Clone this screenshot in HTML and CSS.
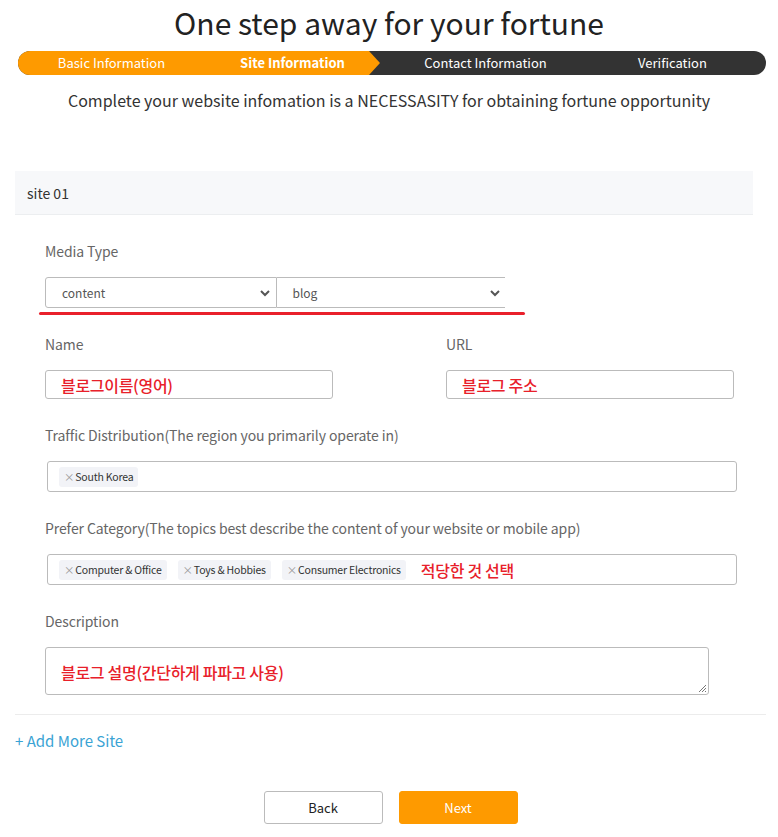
FILE: index.html
```html
<!doctype html>
<html lang="en-us">

<head>
    <meta charset="utf-8">
    <title>One step away for your fortune</title>
    <link rel="stylesheet" href="styles.css">
</head>

<body>
    <div id="main-container">
        <h1 class="title">One step away for your fortune</h1>

        <div class="steps">
            <div class="step done">Basic Information</div>
            <div class="step active">Site Information</div>
            <div class="step">Contact Information</div>
            <div class="step">Verification</div>
        </div>

        <p class="subtitle">Complete your website infomation is a NECESSASITY for obtaining fortune opportunity</p>

        <div class="site">
            <div class="site-head">site 01</div>

            <div class="site-body">
                <div class="field">
                    <div class="label">Media Type</div>
                    <div class="selects">
                        <div class="select">
                            <span>content</span>
                            <svg width="12" height="8" viewBox="0 0 12 8"><path d="M2 2l4 4 4-4" fill="none" stroke="#555" stroke-width="2"/></svg>
                        </div>
                        <div class="select last">
                            <span>blog</span>
                            <svg width="12" height="8" viewBox="0 0 12 8"><path d="M2 2l4 4 4-4" fill="none" stroke="#555" stroke-width="2"/></svg>
                        </div>
                        <div class="red-line"></div>
                    </div>
                </div>

                <div class="field two-cols">
                    <div>
                        <div class="label">Name</div>
                        <div class="input"><span class="note">블로그이름(영어)</span></div>
                    </div>
                    <div>
                        <div class="label">URL</div>
                        <div class="input"><span class="note">블로그 주소</span></div>
                    </div>
                </div>

                <div class="field">
                    <div class="label">Traffic Distribution(The region you primarily operate in)</div>
                    <div class="tags">
                        <span class="tag"><i>×</i>South Korea</span>
                    </div>
                </div>

                <div class="field">
                    <div class="label">Prefer Category(The topics best describe the content of your website or mobile app)</div>
                    <div class="tags">
                        <span class="tag"><i>×</i>Computer &amp; Office</span>
                        <span class="tag"><i>×</i>Toys &amp; Hobbies</span>
                        <span class="tag"><i>×</i>Consumer Electronics</span>
                        <span class="note pick">적당한 것 선택</span>
                    </div>
                </div>

                <div class="field last-field">
                    <div class="label">Description</div>
                    <div class="textarea">
                        <span class="note">블로그 설명(간단하게 파파고 사용)</span>
                        <svg class="grip" width="9" height="9" viewBox="0 0 9 9"><path d="M8 1L1 8M8 4L4 8M8 7L7 8" stroke="#777" stroke-width="1"/></svg>
                    </div>
                </div>
            </div>
        </div>

        <div class="add-more">+ Add More Site</div>

        <div class="buttons">
            <button class="btn">Back</button>
            <button class="btn primary">Next</button>
        </div>
    </div>
</body>

</html>
```

FILE: styles.css
```css
body {
    margin: 0;
    font-family: "Noto Sans CJK KR", "Noto Sans", sans-serif;
    color: #333;
    background: #fff;
}

#main-container {
    width: 778px;
    padding-bottom: 12px;
}

.title {
    margin: 0;
    font-size: 30px;
    font-weight: normal;
    line-height: 44px;
    text-align: center;
    color: #222;
}

.steps {
    margin: 7px 12px 0 18px;
    height: 24px;
    display: grid;
    grid-template-columns: repeat(4, 1fr);
    background: #333;
    border-radius: 12px;
    overflow: hidden;
}

.step {
    color: #fff;
    font-size: 13px;
    line-height: 24px;
    text-align: center;
}

.step.done {
    background: #fe9a00;
}

.step.active {
    background: #fe9a00;
    font-weight: bold;
    padding-right: 12px;
    clip-path: polygon(0 0, calc(100% - 23px) 0, calc(100% - 12px) 50%, calc(100% - 23px) 100%, 0 100%);
}

.subtitle {
    margin: 13px 0 0;
    font-size: 16px;
    line-height: 24px;
    text-align: center;
    color: #333;
}

.site {
    margin: 59px 12px 0 15px;
    border-bottom: 1px solid #ececec;
}

.site-head {
    width: 738px;
    height: 44px;
    box-sizing: border-box;
    padding-left: 12px;
    line-height: 44px;
    font-size: 14px;
    color: #333;
    background: #f7f8fa;
    border-bottom: 1px solid #eceef0;
}

.site-body {
    padding: 26px 0 19px 30px;
}

.field {
    margin-bottom: 26px;
}

.field.last-field {
    margin-bottom: 0;
}

.label {
    font-size: 14px;
    line-height: 20px;
    color: #666;
    margin-bottom: 16px;
    white-space: nowrap;
    letter-spacing: -0.1px;
}

.selects {
    position: relative;
    display: flex;
    width: 460px;
}

.select {
    flex: 1;
    height: 31px;
    box-sizing: border-box;
    display: flex;
    align-items: center;
    justify-content: space-between;
    padding: 0 5px 0 16px;
    font-size: 12px;
    color: #555;
    border: 1px solid #bbb;
    border-radius: 3px 0 0 3px;
}

.select.last {
    border-left: none;
    border-right: none;
    border-radius: 0;
    padding-right: 4px;
}

.red-line {
    position: absolute;
    left: -6px;
    top: 35px;
    width: 486px;
    height: 3px;
    border-radius: 2px;
    background: #e9202b;
}

.two-cols {
    display: grid;
    grid-template-columns: 288px 288px;
    column-gap: 113px;
}

.input {
    height: 29px;
    box-sizing: border-box;
    border: 1px solid #bbb;
    border-radius: 3px;
    padding-left: 15px;
    display: flex;
    align-items: center;
}

.note {
    color: #e8202a;
    font-size: 16px;
    font-weight: 500;
    letter-spacing: -0.3px;
}

.note.pick {
    margin-left: 4px;
}

.tags {
    margin-left: 2px;
    width: 690px;
    height: 31px;
    box-sizing: border-box;
    border: 1px solid #bbb;
    border-radius: 3px;
    padding: 0 11px;
    display: flex;
    align-items: center;
    gap: 11px;
}

.tag {
    height: 20px;
    line-height: 20px;
    padding: 0 5px;
    background: #f2f3f7;
    border-radius: 3px;
    font-size: 10.5px;
    letter-spacing: -0.2px;
    color: #333;
}

.tag i {
    font-style: normal;
    color: #999;
    margin-right: 1px;
}

.textarea {
    position: relative;
    width: 664px;
    height: 48px;
    box-sizing: border-box;
    border: 1px solid #bbb;
    border-radius: 3px;
    padding: 12px 15px 0;
}

.grip {
    position: absolute;
    right: 1px;
    bottom: 1px;
}

.add-more {
    margin: 16px 0 0 15px;
    font-size: 15px;
    line-height: 20px;
    color: #3aa3d4;
}

.buttons {
    margin-top: 40px;
    display: flex;
    justify-content: center;
    gap: 16px;
    padding-left: 3px;
}

.btn {
    width: 119px;
    height: 33px;
    font-family: "Noto Sans CJK KR", "Noto Sans", sans-serif;
    font-size: 13px;
    color: #222;
    background: #fff;
    border: 1px solid #bbb;
    border-radius: 3px;
}

.btn.primary {
    color: #fff;
    background: #fe9a00;
    border-color: #fe9a00;
}
```
